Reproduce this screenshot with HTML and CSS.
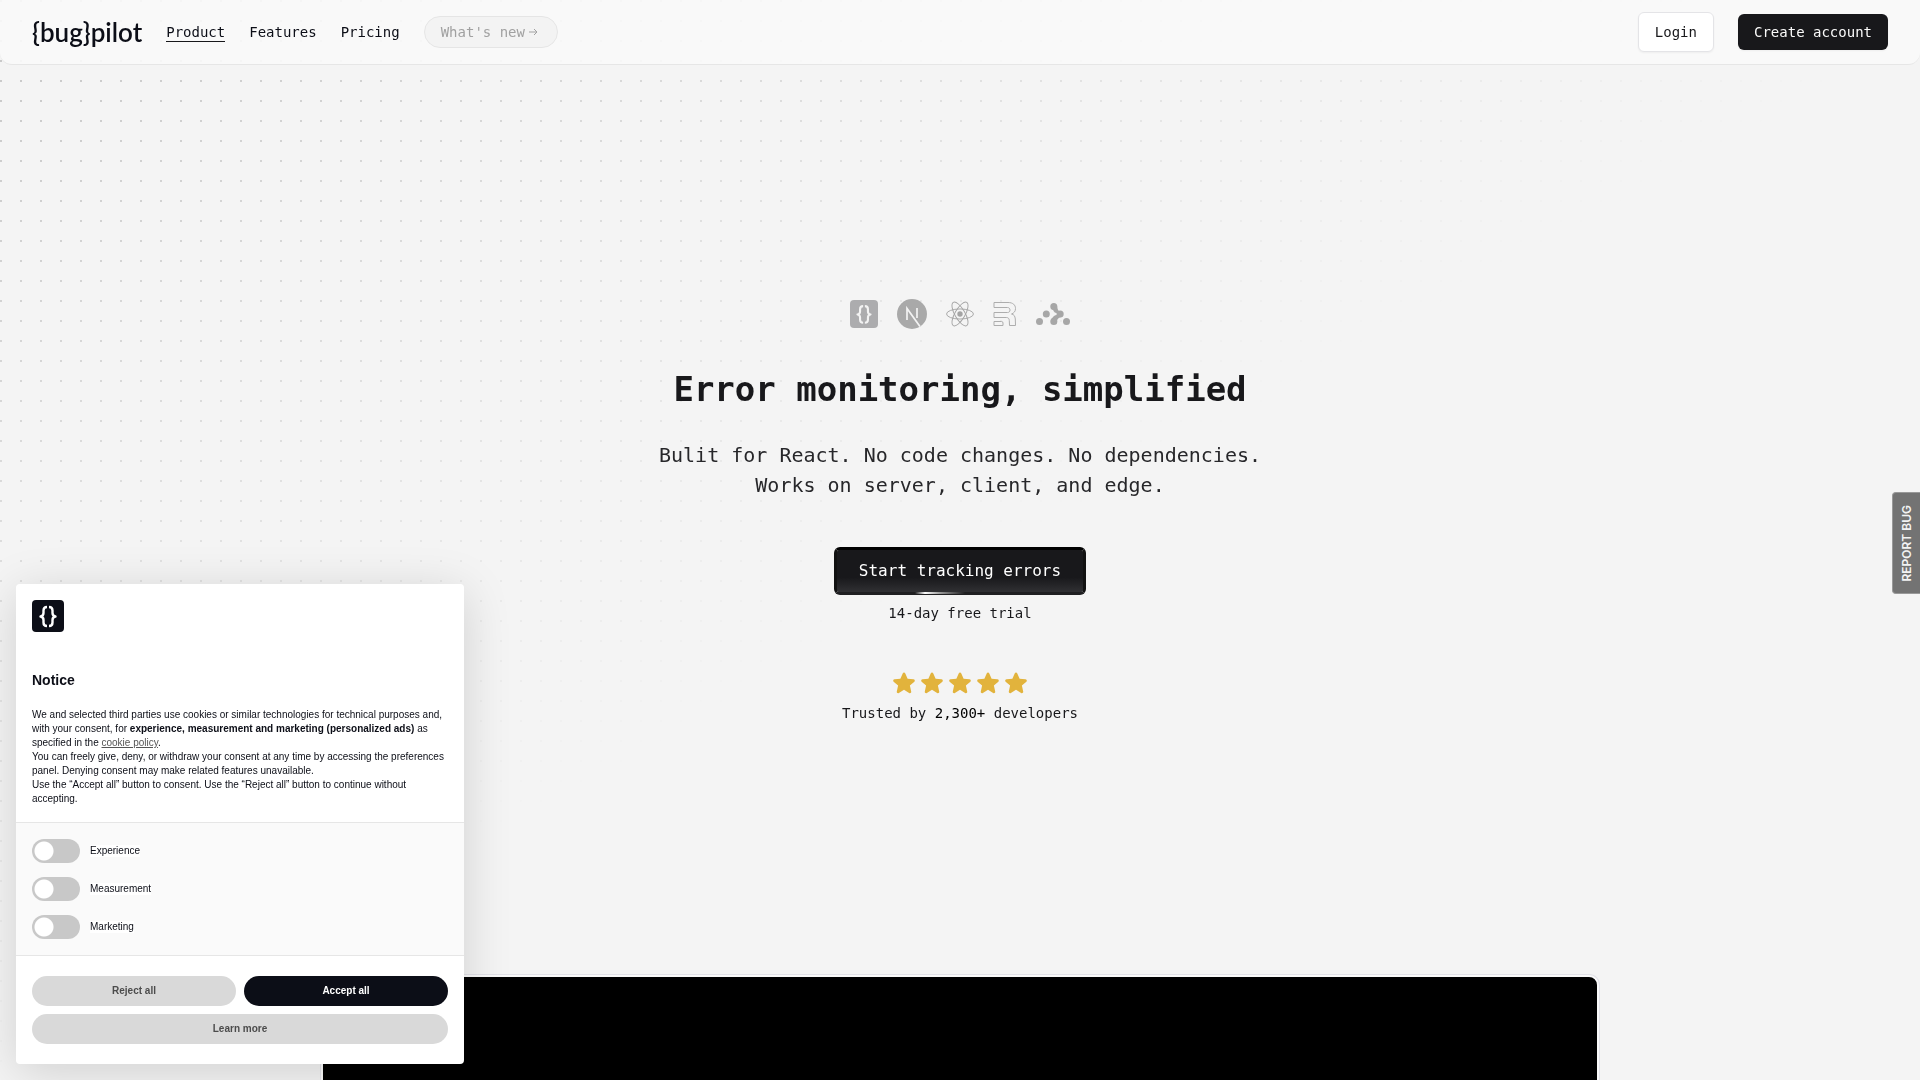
FILE: index.html
```html
<!DOCTYPE html>
<html lang="en">
<head>
<meta charset="utf-8">
<title>Bugpilot – Error monitoring, simplified</title>
<link rel="stylesheet" href="styles.css">
</head>
<body>
<svg class="defs" aria-hidden="true">
  <symbol id="mark" viewBox="0 0 32 32">
    <path fill="none" stroke="currentColor" stroke-width="2.4" stroke-linejoin="round" d="M15 7c-2.500 0-3.500 1.200-3.500 3.500v2.500c0 2-.8 3.200-3 3.500 2.200.3 3 1.500 3 3.500v2.500c0 2.300 1 3.500 3.500 3.500M17 7c2.500 0 3.500 1.200 3.500 3.500v2.500c0 2 .8 3.200 3 3.500-2.200.3-3 1.500-3 3.500v2.500c0 2.300-1 3.500-3.500 3.500"/>
  </symbol>
  <symbol id="star" viewBox="1 1 22 22">
    <path d="M10.800 3.200c.5-1.100 1.900-1.100 2.400 0l2.100 5 5.400.4c1.200.1 1.600 1.500.8 2.300l-4.100 3.500 1.200 5.300c.3 1.100-.9 2-1.900 1.400L12 18.300l-4.700 2.800c-1 .6-2.200-.3-1.900-1.400l1.200-5.300-4.100-3.500c-.8-.8-.4-2.200.8-2.300l5.400-.4z"/>
  </symbol>
</svg>

<header class="topbar">
  <nav class="nav">
    <a class="logo" href="#">{bug}pilot</a>
    <a class="nav-link active" href="#">Product</a>
    <a class="nav-link" href="#">Features</a>
    <a class="nav-link" href="#">Pricing</a>
    <a class="pill" href="#">What's new
      <svg width="16" height="16" viewBox="0 0 16 16" fill="none" stroke="currentColor"><path d="M4 8h8M9 5l3 3-3 3"/></svg>
    </a>
  </nav>
  <div class="account">
    <button class="btn-login" type="button">Login</button>
    <button class="btn-create" type="button">Create account</button>
  </div>
</header>

<main>
  <section class="hero">
    <div class="stack">
      <span class="tile"><svg width="28" height="28"><use href="#mark"/></svg></span>
      <svg width="30" height="30" viewBox="0 0 30 30"><circle cx="15" cy="15" r="15" fill="#a9a9a9"/><path d="M10 21V9.500l13 18M20 9v10" fill="none" stroke="#f3f3f3" stroke-width="1.700"/></svg>
      <svg width="28" height="28" viewBox="0 0 30 30" fill="none" stroke="#a4a4a4"><circle cx="15" cy="15" r="2.900" fill="#a4a4a4" stroke="none"/><ellipse cx="15" cy="15" rx="14.400" ry="5.400"/><ellipse cx="15" cy="15" rx="14.400" ry="5.400" transform="rotate(60 15 15)"/><ellipse cx="15" cy="15" rx="14.400" ry="5.400" transform="rotate(120 15 15)"/></svg>
      <svg width="24" height="26" viewBox="0 0 24 26" fill="none" stroke="#adadad"><path d="M1 6.500v-5h14c5 0 7.500 2.500 7.500 6 0 3-1.500 4.500-4 5.500 2.500.5 3.500 2 3.800 5l.2 6.500h-6l-.2-5c-.1-2-1-3-3-3H1v-5h13.500c1.700 0 2.500-1 2.500-2.500S16 6.500 14.500 6.500zM1 24.500v-4h7.500q1.500 0 1.500 1.500v2.500z"/></svg>
      <svg width="34" height="24" viewBox="0 0 34 24" fill="#a7a7a7"><circle cx="3.500" cy="19.500" r="3.500"/><circle cx="10.300" cy="12" r="3.500"/><circle cx="17.800" cy="4.500" r="3.500"/><circle cx="24.200" cy="12" r="3.500"/><circle cx="17.800" cy="19.500" r="3.500"/><circle cx="30.500" cy="19.500" r="3.500"/><path d="M15 6.500c3 1 2.500 4.500 5.500 4.500q1 1 0 2c-3.500.5-3 2.500-5.500 4l5 5.200c1.500-1.500 0-5.700 4.500-6.900l2-5c-4.500-1-4.500-2-5.500-6z"/></svg>
    </div>
    <h1>Error monitoring, simplified</h1>
    <p class="lead">Bulit for React. No code changes. No dependencies.<br>Works on server, client, and edge.</p>
    <button class="cta" type="button">Start tracking errors</button>
    <p class="note">14-day free trial</p>
    <div class="stars" role="img" aria-label="Five stars">
      <svg width="24" height="24"><use href="#star"/></svg>
      <svg width="24" height="24"><use href="#star"/></svg>
      <svg width="24" height="24"><use href="#star"/></svg>
      <svg width="24" height="24"><use href="#star"/></svg>
      <svg width="24" height="24"><use href="#star"/></svg>
    </div>
    <p class="note">Trusted by <span class="count">2,300+</span> developers</p>
  </section>
  <div class="video"></div>
</main>

<button class="report" type="button">REPORT BUG</button>

<aside class="notice" aria-labelledby="notice-title">
  <div class="notice-text">
    <span class="notice-mark"><svg width="32" height="32"><use href="#mark"/></svg></span>
    <h2 id="notice-title">Notice</h2>
    <p>We and selected third parties use cookies or similar technologies for technical purposes and, with your consent, for <b>experience, measurement and marketing (personalized ads)</b> as specified in the <a href="#">cookie policy</a>.</p>
    <p>You can freely give, deny, or withdraw your consent at any time by accessing the preferences panel. Denying consent may make related features unavailable.</p>
    <p>Use the “Accept all” button to consent. Use the “Reject all” button to continue without accepting.</p>
  </div>
  <div class="choices">
    <label class="choice"><input type="checkbox" role="switch"><span>Experience</span></label>
    <label class="choice"><input type="checkbox" role="switch"><span>Measurement</span></label>
    <label class="choice"><input type="checkbox" role="switch"><span>Marketing</span></label>
  </div>
  <div class="notice-actions">
    <button type="button">Reject all</button>
    <button class="accept" type="button">Accept all</button>
    <button class="more" type="button">Learn more</button>
  </div>
</aside>
</body>
</html>
```

FILE: styles.css
```css
* { box-sizing: border-box; }

html { overflow: hidden; }

body {
  margin: 0;
  min-height: 100vh;
  background: #f4f4f4;
  color: #18181b;
  font: 14px/20px "DejaVu Sans Mono", "Liberation Mono", monospace;
}

h1, h2, p { margin: 0; }
a { color: inherit; text-decoration: none; }
button { font: inherit; cursor: pointer; }
.defs { display: none; }

/* dotted grid that fades towards the middle of the window */
body::before {
  content: "";
  position: fixed;
  inset: 0;
  z-index: -1;
  background: conic-gradient(from 270deg at 2px 2px, #c6c6c6 90deg, transparent 0) 0 0 / 20px 20px;
  mask-image: linear-gradient(to bottom right, #000, transparent 52%);
}

.topbar {
  position: fixed;
  inset: 0 0 auto;
  display: flex;
  align-items: center;
  justify-content: space-between;
  height: 65px;
  padding: 0 32px;
  background: rgba(250, 250, 250, .9);
  border-bottom: 1px solid #e6e6e6;
  border-radius: 0 0 12px 12px;
}

.nav { display: flex; align-items: center; gap: 24px; color: #0c0e17; }
.logo { font: 600 26px/32px Lato, sans-serif; }
.nav-link { line-height: 18px; border-bottom: 1px solid transparent; }
.nav-link.active { border-color: #18181b; }
.pill {
  display: flex;
  align-items: center;
  height: 32px;
  padding: 0 16px;
  color: #a1a1a1;
  background: #f3f3f3;
  border: 1px solid #e5e5e5;
  border-radius: 16px;
}

.account { display: flex; align-items: center; gap: 24px; }
.btn-login, .btn-create { padding: 0 16px; border-radius: 6px; box-shadow: 0 1px 2px rgba(0, 0, 0, .05); }
.btn-login { height: 40px; background: #fff; color: #18181b; border: 1px solid #e4e4e7; }
.btn-create { height: 36px; background: #18181b; color: #fafafa; border: 0; }

.hero {
  display: flex;
  flex-direction: column;
  align-items: center;
  padding: 298px 24px 252px;
  text-align: center;
}
.stack { display: flex; align-items: center; gap: 19px; height: 32px; }
.tile { display: flex; color: #f3f3f3; background: #acacae; border-radius: 4px; }
h1 { margin-top: 36px; font-size: 34px; line-height: 46px; font-weight: 700; }
.lead { margin-top: 28px; font-size: 20px; line-height: 30px; color: #27272a; }
.cta {
  position: relative;
  height: 48px;
  margin: 47px 0 8px;
  padding: 0 22px;
  font-size: 16px;
  color: #fff;
  border: 3px solid;
  border-color: #000 #111 #1f1f21;
  border-radius: 6px;
  background: linear-gradient(#18181b 65%, #303033) padding-box #111;
}
/* light running along the lower edge */
.cta::after {
  content: "";
  position: absolute;
  left: 78px;
  bottom: -2px;
  width: 50px;
  height: 2px;
  background: linear-gradient(90deg, transparent, #fff 20%, #999 50%, transparent);
}
.stars { display: flex; gap: 4px; margin: 48px 0 8px; fill: #e2b33c; }
.count { color: #000; }

.video {
  width: calc(100% - 642px);
  max-width: 1278px;
  height: 720px;
  margin: 0 auto;
  background: #000;
  border: 2px solid #fafafa;
  border-radius: 10px;
  box-shadow: 0 0 0 1px #e2e2e8;
}

.report {
  position: fixed;
  top: 492px;
  right: 0;
  width: 28px;
  height: 102px;
  padding: 0;
  color: #f3f3f3;
  background: #737373;
  border: 1px solid #999;
  border-right: 0;
  border-radius: 4px 0 0 4px;
  font: 600 12px/26px Inter, sans-serif;
  writing-mode: sideways-lr;
}

.notice {
  position: fixed;
  left: 16px;
  bottom: 16px;
  width: 448px;
  background: #fff;
  color: #0c0e17;
  border-radius: 4px;
  box-shadow: 0 8px 48px rgba(0, 0, 0, .15);
  font: 10px/14px "Liberation Sans", Arial, sans-serif;
}
.notice-text { padding: 16px; }
.notice-mark { display: inline-flex; vertical-align: top; color: #fff; background: #0c0e17; border-radius: 4px; }
.notice h2 { margin: 36px 0 16px; font-size: 14px; line-height: 24px; }
.notice a { color: #555; text-decoration: underline; }
.choices {
  display: grid;
  gap: 14px;
  padding: 16px;
  background: #fafafa;
  border: solid #e6e6e6;
  border-width: 1px 0;
}
.choice { display: flex; align-items: center; gap: 10px; }
.choice span { line-height: 12px; background: #fff; }
.choice input {
  appearance: none;
  width: 48px;
  height: 24px;
  margin: 0;
  border-radius: 12px;
  background: radial-gradient(circle at 12px 12px, #fff 9px, #c8c8c8 10px);
}
.choice input:checked { background: radial-gradient(circle at 36px 12px, #fff 9px, #0c0e17 10px); }
.notice-actions { display: grid; grid-template-columns: 1fr 1fr; gap: 8px; padding: 20px 16px; }
.notice-actions button {
  height: 30px;
  border: 0;
  border-radius: 15px;
  color: #4c4c4c;
  background: #d9d9d9;
  font-weight: 700;
}
.notice-actions .accept { color: #fff; background: #0c0e17; }
.notice-actions .more { grid-column: span 2; }
```
